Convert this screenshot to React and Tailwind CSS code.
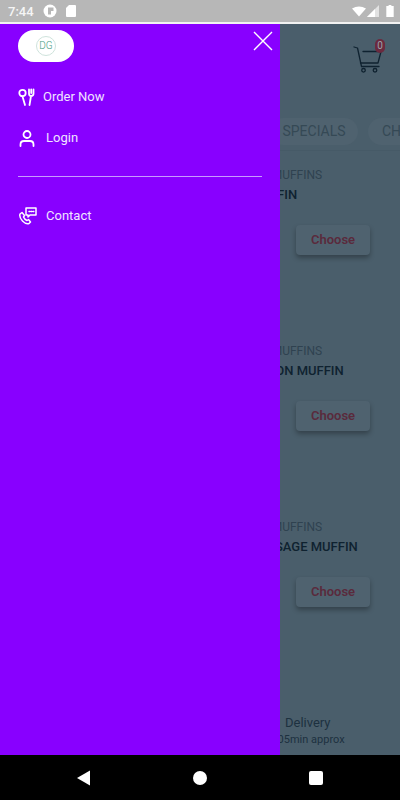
const font = { fontFamily: "Roboto, sans-serif" };

const MUFFINS = [
  { name: "MUFFIN", top: "mt-[16px]" },
  { name: "BACON MUFFIN", top: "mt-[88px]" },
  { name: "SAUSAGE MUFFIN", top: "mt-[88px]" },
];

function Cart() {
  return (
    <div className="relative w-[30px] h-[30px]">
      <svg viewBox="0 0 30 30" className="w-[30px] h-[30px] text-[#0f2230]" fill="none" stroke="currentColor" strokeWidth="1.3" strokeLinecap="round" strokeLinejoin="round">
        <path d="M1 3 L4.5 4 L8.5 22.5 L26 22.5" />
        <path d="M10 7.5 L28 7.5 L25 19 L7.5 19" />
        <circle cx="10.5" cy="26.3" r="1.8" />
        <circle cx="22" cy="26.3" r="1.8" />
      </svg>
      <span className="absolute -top-[5px] -right-[2px] w-[10px] h-[14px] rounded-full bg-[#6b2a3f] text-[#9aa3aa] text-[10px] leading-[14px] text-center">0</span>
    </div>
  );
}

function MuffinRow({ name, top }) {
  return (
    <div className={top}>
      <div className="pl-[232px] text-[12px] leading-[16px] text-[#2f4250] whitespace-nowrap">CRAFT MUFFINS</div>
      <div className="mt-[4px] pl-[250px] text-[13px] leading-[16px] font-medium text-[#0f2230] whitespace-nowrap">{name}</div>
      <div className="mt-[22px] pl-[296px]">
        <button className="w-[74px] h-[30px] rounded-[4px] bg-[#4f626f] shadow-[0_3px_5px_rgba(0,0,0,0.3)] text-[13px] font-semibold text-[#5a2a3c]">Choose</button>
      </div>
    </div>
  );
}

function DrawerRow({ icon, label, gap }) {
  return (
    <div className={"flex items-center h-[20px] text-[13px] text-[#f0e4ff] " + gap}>
      {icon}
      <span>{label}</span>
    </div>
  );
}

export default function App() {
  return (
    <div className="w-[400px] h-[800px] flex flex-col bg-black overflow-hidden" style={font}>
      <div className="h-[22px] bg-[#b7b7b7] flex items-center justify-between pl-[8px] pr-[6px] text-white">
        <div className="flex items-center gap-[9px]">
          <span className="text-[13px] font-medium leading-none text-[#f5f5f5]">7:44</span>
          <svg viewBox="0 0 14 14" className="w-[14px] h-[14px]"><circle cx="7" cy="7" r="6.5" fill="#fff" /><rect x="5" y="3.5" width="3" height="7" fill="#b7b7b7" /><rect x="8" y="3.5" width="2.5" height="3.5" fill="#b7b7b7" /></svg>
          <svg viewBox="0 0 10 12" className="w-[10px] h-[12px]"><path d="M3 0 H9 Q10 0 10 1 V11 Q10 12 9 12 H1 Q0 12 0 11 V3 Z" fill="#fff" /></svg>
        </div>
        <div className="flex items-center gap-[1px]">
          <svg viewBox="0 0 14 10" className="w-[14px] h-[11px]"><path d="M0 2 Q7 -2 14 2 L7 10 Z" fill="#fff" /></svg>
          <svg viewBox="0 0 12 12" className="w-[12px] h-[12px] mr-[6px]"><path d="M12 0 V12 H0 Z" fill="#fff" fillOpacity="0.6" /><path d="M8 4 V12 H0 L8 4 Z" fill="#fff" /></svg>
          <svg viewBox="0 0 8 13" className="w-[8px] h-[12px]"><path d="M2.5 0 H5.5 V1 H8 V13 H0 V1 H2.5 Z" fill="#fff" /></svg>
        </div>
      </div>
      <div className="h-[2px] bg-[#f2f2f2]" />

      <div className="relative flex-1 bg-[#4a5e6b] overflow-hidden">
        <div className="flex justify-end pt-[20px] pr-[17px]">
          <Cart />
        </div>
        <div className="mt-[44px] h-[32px] flex items-start gap-[10px] pl-[270px] border-b border-[#465a67] box-content whitespace-nowrap overflow-hidden">
          <div className="shrink-0 h-[27px] w-[88px] rounded-full bg-[#4f626f] text-[14px] leading-[27px] text-center text-[#354955]">SPECIALS</div>
          <div className="shrink-0 h-[27px] w-[88px] rounded-full bg-[#4f626f] text-[14px] leading-[27px] pl-[14px] text-[#354955]">CHICKEN</div>
        </div>
        {MUFFINS.map((m) => <MuffinRow key={m.name} {...m} />)}
        <div className="mt-[108px] pl-[285px] text-[13px] leading-[16px] text-[#1d3140]">Delivery</div>
        <div className="mt-[2px] pl-[244px] text-[11px] leading-[14px] text-[#1d3140] whitespace-nowrap">Within 05min approx</div>

        <div className="absolute inset-y-0 left-0 w-[280px] bg-[#8800ff]">
          <div className="flex items-start justify-between pl-[18px] pr-[7px] pt-[6px]">
            <div className="w-[56px] h-[32px] rounded-full bg-white flex items-center justify-center">
              <div className="w-[20px] h-[20px] rounded-full border border-[#cfe3dc] flex items-center justify-center text-[10px] font-light leading-none text-[#3f9a80]">DG</div>
            </div>
            <svg viewBox="0 0 20 20" className="w-[20px] h-[20px] mt-[1px]" fill="none" stroke="#fff" strokeWidth="1.4">
              <path d="M1 1 L19 19 M19 1 L1 19" />
            </svg>
          </div>

          <div className="pl-[18px] pt-[25px] flex flex-col gap-[21px]">
            <DrawerRow gap="gap-[7px]" label="Order Now" icon={
              <svg viewBox="0 0 18 18" className="w-[18px] h-[18px]" fill="none" stroke="#fff" strokeWidth="1.8" strokeLinecap="round" strokeLinejoin="round">
                <circle cx="4.5" cy="5" r="3.2" />
                <path d="M4.5 8.5 L7 17" />
                <path d="M11 1.5 V5.5 Q11 8 13 8 Q15.5 8 15.5 5.5 V1.5 M13.2 1.5 V5 M13 8 L11.5 17" />
              </svg>
            } />
            <DrawerRow gap="gap-[10px]" label="Login" icon={
              <svg viewBox="0 0 18 18" className="w-[18px] h-[18px]" fill="none" stroke="#fff" strokeWidth="1.8" strokeLinecap="round">
                <circle cx="9" cy="5.5" r="3.5" />
                <path d="M2.5 17 V15.5 Q2.5 12 6 12 H12 Q15.5 12 15.5 15.5 V17" />
              </svg>
            } />
          </div>

          <div className="mt-[28px] ml-[18px] mr-[18px] h-px bg-[#c79bff]" />

          <div className="pl-[18px] pt-[29px]">
            <DrawerRow gap="gap-[9px]" label="Contact" icon={
              <svg viewBox="0 0 19 18" className="w-[19px] h-[18px]" fill="none" stroke="#fff" strokeWidth="1.5" strokeLinecap="round" strokeLinejoin="round">
                <path d="M2 7 L4 5.5 L6.5 8.5 L5.5 10 Q6.5 12.5 9 13.5 L10.5 12.5 L12.5 15 L11 16.5 Q8 17.5 4.5 14 Q1 10.5 2 7 Z" />
                <path d="M8 1 H18 V8 H12 L10 10 V8 H8 Z" />
                <path d="M11 4.5 H11.8 M13 4.5 H13.8 M15 4.5 H15.8" />
              </svg>
            } />
          </div>
        </div>
      </div>

      <div className="h-[45px] bg-black flex items-center">
        <div className="w-[77px]" />
        <svg viewBox="0 0 14 16" className="w-[13px] h-[16px]"><path d="M14 0 V16 L0 8 Z" fill="#fff" /></svg>
        <div className="w-[14px] h-[14px] rounded-full bg-white ml-[103px]" />
        <div className="w-[14px] h-[14px] rounded-[2px] bg-white ml-[102px]" />
      </div>
    </div>
  );
}
